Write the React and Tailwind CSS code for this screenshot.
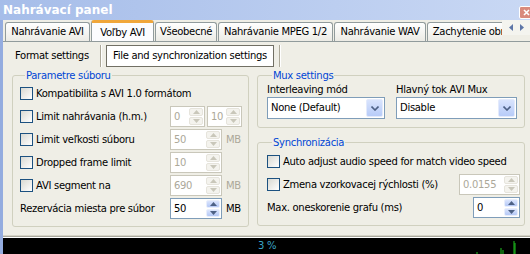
import React from 'react';

const Arrow = ({ dir, color }) => (
  <svg width="7" height="4" viewBox="0 0 7 4">
    {dir === 'up' ? (
      <path d="M0 4 L3.5 0 L7 4 Z" fill={color} />
    ) : (
      <path d="M0 0 L3.5 4 L7 0 Z" fill={color} />
    )}
  </svg>
);

function Spin({ w, value, disabled }) {
  const border = disabled ? 'border-[#c9c7ba]' : 'border-[#7f9db9]';
  const btn = disabled
    ? 'bg-[#f4f3ee] border-[#e6e4dc]'
    : 'bg-gradient-to-b from-[#dbe5fd] to-[#b4c8f6] border-[#e8eefc]';
  const arrow = disabled ? '#c9c7ba' : '#4d6185';
  return (
    <div className={`h-[21px] ${w} border ${border} bg-white flex items-stretch`}>
      <div className={`flex-1 pl-[3px] flex items-center ${disabled ? 'text-[#aca899]' : 'text-black'}`}>
        {value}
      </div>
      <div className="w-[16px] flex flex-col gap-[1px] p-[1px]">
        <div className={`flex-1 rounded-[2px] border ${btn} flex items-center justify-center`}>
          <Arrow dir="up" color={arrow} />
        </div>
        <div className={`flex-1 rounded-[2px] border ${btn} flex items-center justify-center`}>
          <Arrow dir="down" color={arrow} />
        </div>
      </div>
    </div>
  );
}

const Check = () => (
  <div className="w-[13px] h-[13px] shrink-0 border border-[#1c5180] bg-gradient-to-br from-[#d9d9d2] to-white" />
);

function Combo({ w, value }) {
  return (
    <div className={`h-[22px] ${w} border border-[#7f9db9] bg-white flex items-stretch`}>
      <div className="flex-1 pl-[3px] flex items-center">{value}</div>
      <div className="w-[17px] m-[1px] rounded-[2px] border border-[#e3eafc] bg-gradient-to-b from-[#d9e4fd] to-[#b7cbf8] flex items-center justify-center">
        <svg width="8" height="5" viewBox="0 0 8 5">
          <path d="M0.5 0.5 L4 4 L7.5 0.5" stroke="#4d6185" strokeWidth="1.6" fill="none" />
        </svg>
      </div>
    </div>
  );
}

function Group({ title, className, children }) {
  return (
    <fieldset className={`border border-[#d0d0bf] rounded-[3px] ${className}`}>
      <legend className="ml-[5px] px-[1px] text-[#0046d5] leading-[13px]">{title}</legend>
      {children}
    </fieldset>
  );
}

const tabs = [
  { label: 'Nahrávanie AVI', w: 'w-[85px]' },
  { label: 'Voľby AVI', w: 'w-[63px]', active: true },
  { label: 'Všeobecné', w: 'w-[62px]' },
  { label: 'Nahrávanie MPEG 1/2', w: 'w-[115px]' },
  { label: 'Nahrávanie WAV', w: 'w-[92px]' },
  { label: 'Zachytenie obrazu', w: 'w-[100px]' },
];

export default function App() {
  return (
    <div className="w-[530px] h-[254px] overflow-hidden flex flex-col bg-[#efeee6] text-black text-[10px] leading-[12px] tracking-[-0.3px] whitespace-nowrap font-['DejaVu_Sans',sans-serif]">
      {/* Title bar */}
      <div className="h-[20px] shrink-0 flex items-center justify-between pl-[3px] bg-gradient-to-r from-[#a6bde9] to-[#c9d8f4]">
        <span className="text-white font-bold text-[12px] tracking-normal">Nahrávací panel</span>
        <div className="w-[15px] h-[13px] mt-[4px] -mr-[4px] rounded-[2px] border border-white bg-[#d98a7c] flex items-center justify-center">
          <svg width="7" height="7" viewBox="0 0 7 7">
            <path d="M1 1 L6 6 M6 1 L1 6" stroke="white" strokeWidth="1.6" />
          </svg>
        </div>
      </div>

      <div className="flex flex-1 min-h-0">
        <div className="w-[3px] shrink-0 bg-[#94acdf]" />
        <div className="flex-1 min-w-0 flex flex-col">
          {/* Tabs */}
          <div className="h-[21px] shrink-0 flex items-end">
            <div className="flex-1 min-w-0 overflow-hidden flex items-end pl-[2px] gap-[1px]">
              {tabs.map((t) =>
                t.active ? (
                  <div
                    key={t.label}
                    className={`${t.w} shrink-0 h-[22px] -mb-[1px] relative z-10 bg-[#fcfcfe] border-x border-[#919b9c] border-t-[3px] border-t-[#f0a63a] rounded-t-[3px] flex items-center justify-center`}
                  >
                    {t.label}
                  </div>
                ) : (
                  <div
                    key={t.label}
                    className={`${t.w} shrink-0 h-[19px] bg-gradient-to-b from-white to-[#ecebe5] border border-b-0 border-[#919b9c] rounded-t-[3px] flex items-center justify-center`}
                  >
                    {t.label}
                  </div>
                )
              )}
            </div>
            <div className="w-[28px] shrink-0 h-[15px] mb-[6px] bg-[#f4f4ef] flex items-center justify-center gap-[7px]">
              <svg width="4" height="7" viewBox="0 0 4 7"><path d="M4 0 L0 3.5 L4 7 Z" fill="#5d76a8" /></svg>
              <svg width="4" height="7" viewBox="0 0 4 7"><path d="M0 0 L4 3.5 L0 7 Z" fill="#5d76a8" /></svg>
            </div>
          </div>

          {/* Panel */}
          <div className="flex-1 min-h-0 border-t border-[#919b9c] flex flex-col">
            {/* Sub tabs */}
            <div className="h-[27px] shrink-0 flex items-center pl-[5px]">
              <div className="w-[92px] h-[22px] flex items-center pl-[7px]">Format settings</div>
              <div className="w-[2px] h-[22px] border-l border-[#aca899] border-r border-r-white" />
              <div className="ml-[4px] w-[168px] h-[22px] border border-[#716f64] bg-white flex items-center pl-[6px]">
                File and synchronization settings
              </div>
              <div className="ml-[5px] w-[2px] h-[22px] border-l border-[#aca899] border-r border-r-white" />
            </div>

            {/* Groups */}
            <div className="flex gap-[8px] pl-[9px] pr-[5px]">
              <Group title="Parametre súboru" className="w-[237px] pl-[7px] pb-[6px]">
                <div className="h-[23px] flex items-center gap-[3px]">
                  <Check />
                  <span>Kompatibilita s AVI 1.0 formátom</span>
                </div>
                <div className="h-[23px] flex items-center">
                  <div className="w-[150px] flex items-center gap-[3px]">
                    <Check />
                    <span>Limit nahrávania (h.m.)</span>
                  </div>
                  <div className="flex gap-[2px]">
                    <Spin w="w-[35px]" value="0" disabled />
                    <Spin w="w-[35px]" value="10" disabled />
                  </div>
                </div>
                <div className="h-[23px] flex items-center">
                  <div className="w-[150px] flex items-center gap-[3px]">
                    <Check />
                    <span>Limit veľkosti súboru</span>
                  </div>
                  <Spin w="w-[52px]" value="50" disabled />
                  <span className="ml-[4px] text-[#aca899]">MB</span>
                </div>
                <div className="h-[23px] flex items-center">
                  <div className="w-[150px] flex items-center gap-[3px]">
                    <Check />
                    <span>Dropped frame limit</span>
                  </div>
                  <Spin w="w-[52px]" value="10" disabled />
                </div>
                <div className="h-[23px] flex items-center">
                  <div className="w-[150px] flex items-center gap-[3px]">
                    <Check />
                    <span>AVI segment na</span>
                  </div>
                  <Spin w="w-[52px]" value="690" disabled />
                  <span className="ml-[4px] text-[#aca899]">MB</span>
                </div>
                <div className="h-[23px] flex items-center">
                  <div className="w-[150px]">Rezervácia miesta pre súbor</div>
                  <Spin w="w-[52px]" value="50" />
                  <span className="ml-[4px]">MB</span>
                </div>
              </Group>

              <div className="w-[268px] flex flex-col">
                <Group title="Mux settings" className="pl-[9px] pb-[8px]">
                  <div className="flex gap-[11px]">
                    <div className="flex flex-col">
                      <div className="h-[15px] flex items-center">Interleaving mód</div>
                      <Combo w="w-[118px]" value="None (Default)" />
                    </div>
                    <div className="flex flex-col">
                      <div className="h-[15px] flex items-center">Hlavný tok AVI Mux</div>
                      <Combo w="w-[121px]" value="Disable" />
                    </div>
                  </div>
                </Group>
                <Group title="Synchronizácia" className="mt-[8px] pl-[9px] pr-[4px] pt-[1px] pb-[6px]">
                  <div className="h-[23px] flex items-center gap-[3px]">
                    <Check />
                    <span>Auto adjust audio speed for match video speed</span>
                  </div>
                  <div className="h-[23px] flex items-center justify-between">
                    <div className="flex items-center gap-[3px]">
                      <Check />
                      <span>Zmena vzorkovacej rýchlosti (%)</span>
                    </div>
                    <Spin w="w-[61px]" value="0.0155" disabled />
                  </div>
                  <div className="h-[23px] flex items-center justify-between">
                    <span>Max. oneskorenie grafu (ms)</span>
                    <Spin w="w-[47px]" value="0" />
                  </div>
                </Group>
              </div>
            </div>

            <div className="flex-1" />
            <div className="h-[1px] bg-[#d6d4c8]" />
            <div className="h-[1px] bg-[#a8a79c]" />
            <div className="h-[1px] bg-white" />
            {/* Graph */}
            <div className="h-[16px] shrink-0 bg-black relative">
              <span className="absolute left-[255px] top-[2px] text-[#3aa6c8]">3 %</span>
              <svg className="absolute inset-0" width="527" height="16" viewBox="0 0 527 16">
                <path d="M474 16 V14 M498 16 V10 M500 16 V12 M511 16 V3 M512 16 V5" stroke="#1fc41f" strokeWidth="1" />
              </svg>
            </div>
          </div>
        </div>
      </div>
    </div>
  );
}
